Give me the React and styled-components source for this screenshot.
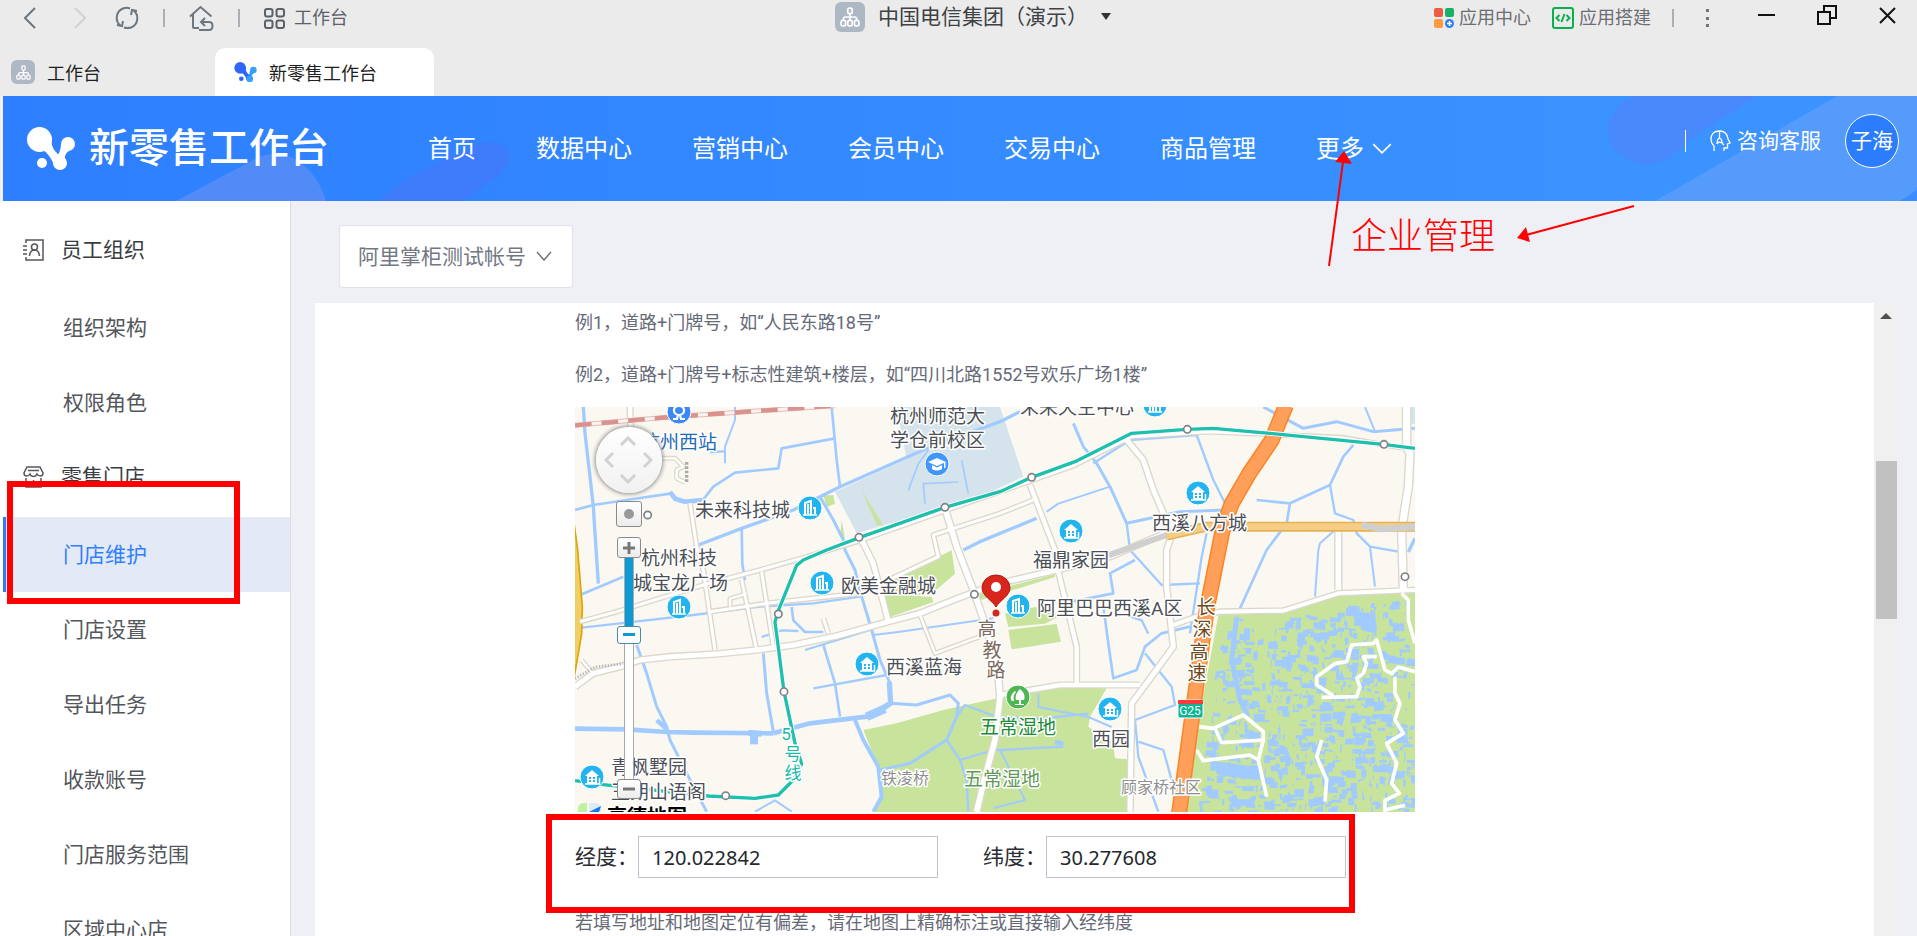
import React from "react";
import styled, { createGlobalStyle, css } from "styled-components";

const GlobalStyle = createGlobalStyle`
  *, *::before, *::after { box-sizing: border-box; }
  html, body, #root { height: 100%; }
  body {
    margin: 0;
    overflow: hidden;
    background: #eff0f5;
    color: #24262b;
    font-family: Roboto, "Noto Sans CJK SC", sans-serif;
    font-size: 18px;
  }
  button, input, select { font-family: inherit; }
`;

/* ---------- page shell ---------- */

const Page = styled.div`
  display: flex;
  flex-direction: column;
  height: 100vh;
`;

const BareButton = styled.button`
  display: inline-flex;
  align-items: center;
  padding: 0;
  border: 0;
  background: none;
  color: inherit;
  font-size: inherit;
  line-height: inherit;
  cursor: pointer;
`;

/* ---------- client window bar ---------- */

const WindowBar = styled.div`
  flex: none;
  background: #ebebeb;
`;

const ToolRow = styled.div`
  display: grid;
  grid-template-columns: 1fr auto 1fr;
  align-items: center;
  height: 36px;
  padding: 0 21px 0 24px;
  color: #6d7780;
`;

const ToolGroup = styled.div`
  display: flex;
  align-items: center;
  gap: ${(p) => (p.$end ? 21 : 24)}px;
  justify-content: ${(p) => (p.$end ? "flex-end" : "flex-start")};
`;

const NavArrows = styled.div`
  display: flex;
  gap: 38px;
  margin-right: 5px;
`;

const Divider = styled.span`
  width: 2px;
  height: 18px;
  background: #a9afb5;
`;

const ToolLink = styled(BareButton)`
  gap: ${(p) => p.$gap || 5}px;
  color: ${(p) => p.$color || "#6b6e73"};
  font-size: 18px;
  line-height: 24px;
`;

const WindowTitle = styled(BareButton)`
  gap: 13px;
  padding: 0 0 3px 26px;
  color: #3e4145;
  font-size: 21px;
  line-height: 30px;
`;

const OrgBadge = styled.span`
  display: inline-flex;
  align-items: center;
  justify-content: center;
  width: ${(p) => p.$size}px;
  height: ${(p) => p.$size}px;
  border-radius: 6px;
  background: #aeb8c4;
`;

const WindowControls = styled.div`
  display: flex;
  align-items: center;
  gap: 42px;
  margin-left: 18px;
  padding-bottom: 6px;
  color: #111;
`;

const TabRow = styled.div`
  display: flex;
  align-items: stretch;
  height: 48px;
  margin-top: 12px;
`;

const Tab = styled(BareButton)`
  gap: 12px;
  width: ${(p) => (p.$active ? 219 : 215)}px;
  padding-left: ${(p) => (p.$active ? 19 : 11)}px;
  border-radius: 10px 10px 0 0;
  background: ${(p) => (p.$active ? "#fff" : "transparent")};
  color: #1d1f22;
  font-size: 18px;
`;

/* ---------- blue header ---------- */

const Header = styled.header`
  position: relative;
  z-index: 3;
  flex: none;
  display: flex;
  align-items: center;
  height: 105px;
  margin-left: 3px;
  background: linear-gradient(90deg, #2e7fff 0%, #3388ff 40%, #3a93ff 85%);
  color: #fff;
`;

const HeaderArt = styled.svg`
  position: absolute;
  top: 0;
  ${(p) => (p.$right ? "right: 0;" : "left: 0;")}
`;

const Brand = styled.a`
  position: relative;
  display: flex;
  align-items: center;
  gap: 14px;
  width: 425px;
  padding-left: 24px;
  color: #fff;
  font-size: 40px;
  font-weight: 500;
  line-height: 56px;
  text-decoration: none;
`;

const MainNav = styled.nav`
  position: relative;
  display: flex;
  gap: 60px;
  font-size: 24px;
  line-height: 36px;
`;

const NavLink = styled.a`
  color: #fff;
  text-decoration: none;
  white-space: nowrap;
`;

const MoreWrap = styled.div`
  position: relative;
`;

const MoreButton = styled(BareButton)`
  gap: 8px;
  white-space: nowrap;
`;

const Annotation = styled.svg`
  position: absolute;
  left: 4px;
  top: 13px;
  pointer-events: none;
`;

const HeaderEnd = styled.div`
  position: relative;
  display: flex;
  align-items: center;
  margin-left: auto;
  padding: 0 18px 16px 0;
  font-size: 21px;
  line-height: 30px;
`;

const Service = styled(BareButton)`
  gap: 6px;
  margin-right: 24px;
  padding-left: 24px;
  border-left: 1px solid #fff;
  line-height: 20px;
`;

const Avatar = styled(BareButton)`
  justify-content: center;
  width: 54px;
  height: 54px;
  border: 1px solid #fff;
  border-radius: 50%;
  background: #2b7dfc;
`;

/* ---------- sidebar ---------- */

const Body = styled.div`
  flex: 1;
  display: flex;
  min-height: 0;
`;

const Sidebar = styled.aside`
  flex: none;
  width: 291px;
  padding: 12px 0 0 3px;
  overflow: hidden;
  border-right: 1px solid #dadce2;
  background: #fff;
`;

const MenuGroup = styled.div`
  display: flex;
  align-items: center;
  gap: 17px;
  height: 77px;
  padding: 0 0 8px 20px;
  color: #3a3d42;
  font-size: 21px;

  svg { margin-top: 4px; }
`;

const redFrame = css`
  content: "";
  position: absolute;
  z-index: 2;
  border: 6px solid #f00;
  pointer-events: none;
`;

const MenuItem = styled.a`
  position: relative;
  display: flex;
  align-items: center;
  height: 75px;
  padding: 0 0 4px 60px;
  color: ${(p) => (p.$active ? "#2f80ff" : "#53565b")};
  background: ${(p) => (p.$active ? "#e3eaf6" : "transparent")};
  box-shadow: ${(p) => (p.$active ? "inset 3px 0 #2a7dff" : "none")};
  font-size: 21px;
  text-decoration: none;

  ${(p) =>
    p.$active &&
    css`
      &::after {
        ${redFrame}
        left: 4px;
        top: -36px;
        width: 233px;
        height: 123px;
      }
    `}
`;

/* ---------- main area ---------- */

const Main = styled.main`
  flex: 1;
  display: flex;
  flex-direction: column;
  gap: 15px;
  min-width: 0;
  padding: 24px 19px 0 24px;
`;

const AccountPicker = styled.label`
  position: relative;
  flex: none;
  align-self: flex-start;
  margin-left: 24px;

  svg {
    position: absolute;
    right: 21px;
    top: 24px;
    pointer-events: none;
  }
`;

const AccountSelect = styled.select`
  appearance: none;
  width: 234px;
  height: 63px;
  padding: 0 18px;
  border: 1px solid #dfe1e6;
  border-radius: 4px;
  background: #fff;
  color: #737783;
  font-size: 21px;
`;

const ScrollPane = styled.div`
  flex: 1;
  display: flex;
  min-height: 0;
`;

const Panel = styled.section`
  flex: 1;
  min-width: 0;
  overflow: hidden;
  padding: 8px 0 0 260px;
  background: #fff;
`;

const Hint = styled.p`
  margin: 0 0 ${(p) => p.$after || 0}px;
  color: #666a77;
  font-size: 18px;
  line-height: 24px;
`;

const ScrollTrack = styled.div`
  display: flex;
  flex-direction: column;
  align-items: center;
  width: 24px;
  padding-top: 10px;
  background: #f0f0f0;
`;

const ScrollThumb = styled.div`
  width: 21px;
  height: 158px;
  margin-top: 142px;
  background: #c1c1c1;
`;

const CoordRow = styled.div`
  position: relative;
  display: flex;
  gap: 45px;
  width: 771px;
  margin: 24px 0 33px;

  &::after {
    ${redFrame}
    left: -29px;
    top: -22px;
    width: 809px;
    height: 99px;
  }
`;

const CoordField = styled.label`
  display: flex;
  align-items: center;
  color: #2a2d33;
  font-size: 21px;
  line-height: 30px;
  white-space: nowrap;
`;

const CoordInput = styled.input`
  width: 300px;
  height: 42px;
  padding: 0 13px;
  border: 1px solid #c0c4d4;
  outline: 0;
  background: #fff;
  color: #24272d;
  && { font-family: "Noto Sans", sans-serif; }
  font-size: 20px;
`;

/* ---------- map ---------- */

const MapFrame = styled.div`
  position: relative;
  width: 840px;
  height: 405px;
  overflow: hidden;

  > svg { display: block; }
`;

const MapText = styled.text`
  fill: ${(p) => p.$color || "#4c4f55"};
  stroke: #fff;
  stroke-width: 3px;
  stroke-linejoin: round;
  paint-order: stroke;
  font-size: ${(p) => p.$size || 19}px;
  font-weight: ${(p) => p.$weight || 400};
  text-anchor: ${(p) => (p.$middle ? "middle" : "start")};
`;

const MapControls = styled.div`
  position: absolute;
  left: 20px;
  top: 20px;
  display: flex;
  flex-direction: column;
  align-items: center;
  width: 67px;
`;

const PanWheel = styled.div`
  display: grid;
  grid-template-columns: repeat(3, 1fr);
  grid-template-rows: repeat(3, 1fr);
  place-items: center;
  width: 66px;
  height: 66px;
  margin-bottom: 8px;
  padding: 5px;
  border-radius: 50%;
  background: linear-gradient(#fff, #f1f1f1);
  box-shadow: 0 0 4px 1px #888;
`;

const PanButton = styled(BareButton)`
  grid-area: ${(p) => p.$area};
`;

const BoxButton = styled(BareButton)`
  justify-content: center;
  width: ${(p) => p.$size}px;
  height: ${(p) => p.$h}px;
  margin-bottom: ${(p) => p.$after || 0}px;
  border: 1px solid #8b8b8b;
  border-radius: 3px;
  background: linear-gradient(#fff, #ececec);
`;

const ZoomRange = styled.input`
  appearance: none;
  writing-mode: vertical-lr;
  direction: rtl;
  width: 24px;
  height: 221px;
  margin: 0;
  background:
    linear-gradient(#0b9ad6 70px, #fff 70px) center / 8px 100% no-repeat,
    linear-gradient(#aaa, #aaa) center / 10px 100% no-repeat;

  &::-webkit-slider-thumb {
    appearance: none;
    width: 24px;
    height: 18px;
    border: 1px solid #4d8ba3;
    border-radius: 3px;
    background: linear-gradient(#0b9ad6, #0b9ad6) center / 12px 3px no-repeat, #fff;
  }
`;

/* Outlines are drawn at three units to the pixel. */
const RIVERS = [
  [10, "25,0 30,79 45,209 55,299 60,379 70,530"],
  [8, "0,309 55,294 155,279 290,259 315,284 385,277 415,239 480,197 610,184 620,124 780,94"],
  [14, "285,255 300,275 330,284 380,280"],
  [8, "770,0 785,159 795,239"],
  [6, "480,0 480,39 450,119 450,169"],
  [7, "405,135 450,133"],
  [10, "370,414 500,364 655,309 795,239 955,169 1045,129 1275,44 1335,14"],
  [8, "500,364 502,470 510,520"],
  [9, "735,269 775,339 805,399 810,429 840,489 860,569 890,669 915,759 945,829 945,889"],
  [16, "943,825 947,889 900,920"],
  [26, "930,905 875,929"],
  [14, "945,889 875,929 705,949 595,979"],
  [14, "595,979 355,977 275,975 155,967 0,965"],
  [18, "520,977 560,980"],
  [24, "537,977 537,1012"],
  [14, "245,940 275,965"],
  [7, "0,664 135,649 355,624 555,599 715,589 855,569"],
  [8, "15,564 145,509"],
  [9, "185,714 215,799 245,899 275,959 285,999 340,1109 395,1214"],
  [9, "565,739 575,859 595,974"],
  [8, "745,714 780,829 795,929"],
  [6, "690,729 885,669"],
  [6, "895,684 975,674 1255,634"],
  [7, "715,844 935,804"],
  [8, "650,600 655,640 690,675 745,675"],
  [7, "560,690 620,670 670,672"],
  [9, "945,889 1025,894 1125,864 1150,889 1145,929 1115,999 1005,1069 915,1089"],
  [7, "1145,929 1170,894 1265,930 1400,935 1540,920"],
  [12, "840,939 865,999 910,1079 920,1169 895,1214"],
  [7, "1115,999 1155,1059 1255,1029 1275,1029 1465,1019"],
  [14, "1440,1005 1465,1010"],
  [7, "1155,1059 1175,1120 1180,1214"],
  [6, "1275,1029 1315,1109 1350,1179 1255,1204"],
  [6, "540,1214 600,1180 650,1214"],
  [10, "1165,429 1215,404 1385,334"],
  [6, "1415,314 1450,290 1605,239"],
  [9, "1495,49 1525,119 1565,169 1605,239 1655,349 1815,314 1950,309"],
  [7, "1655,349 1665,429 1760,534 1875,529"],
  [7, "1555,169 1665,99 1865,84 1915,219 1950,289"],
  [9, "2065,0 2185,64 2285,44 2395,74 2520,64"],
  [6, "2370,0 2400,74"],
  [8, "2335,114 2305,149 2265,234 2145,289 2045,279"],
  [8, "2145,289 2135,349 2075,429 1995,604"],
  [7, "2265,234 2280,319 2335,339 2345,379 2385,419 2470,434"],
  [6, "2385,419 2400,539"],
  [6, "2280,369 2235,409 2230,429 2220,569"],
  [10, "2520,394 2500,435"],
  [7, "1895,379 1880,450 1845,679"],
  [8, "1680,459 1605,499 1615,559 1465,589"],
  [8, "1585,599 1600,709 1615,814 1685,789 1710,719 1760,679 1845,659"],
  [7, "1640,620 1700,640 1720,680"],
  [7, "1710,739 1790,839 1800,894 1680,939"],
  [7, "1680,939 1690,1049 1750,1214"],
  [7, "1690,1004 1765,1029 1790,1119"],
  [6, "1390,860 1390,900 1540,930 1610,960"],
  [5, "1000,250 1030,170 1060,130"],
  [5, "1050,290 1045,230 1150,225"],
  [5, "1160,160 1180,260"],
];

const GREENS = [
  "925,560 1070,570 1075,585 945,630",
  "945,520 1130,430 1140,500 1070,560 930,570",
  "1300,669 1445,651 1458,704 1310,727",
  "1215,560 1440,502 1440,510 1215,580",
  "1290,620 1380,600 1460,625 1410,650 1300,660",
  "745,265 775,265 780,290 755,300",
  "800,340 810,395 795,390",
  "860,250 925,355 905,355",
  "865,969 965,949 1105,909 1260,875 1385,854 1455,839 1595,844 1545,929 1540,959 1615,1009 1620,1054 1660,1057 1660,1215 895,1215 925,1170 910,1080",
  "1930,625 2125,615 2295,560 2520,555 2520,1215 1835,1215 1865,970",
];

const ROADS = [
  [18, "0,839 55,799 135,779 195,759 285,749 425,741 545,729 655,714 785,687 940,644 1035,619 1135,579 1215,549 1295,524 1445,489 1605,449 1770,379"],
  [12, "15,644 125,614 385,534 555,489 675,455 855,401 1110,311 1370,221 1500,174 1670,89 1900,74 2300,92 2480,122"],
  [18, "855,389 895,470 940,644"],
  [12, "405,614 575,589 855,559 1090,449 1075,384 1275,319 1375,279"],
  [12, "345,289 365,419 385,489 420,729"],
  [12, "500,519 545,729"],
  [12, "560,494 595,719"],
  [10, "465,599 465,575 515,560"],
  [12, "745,634 760,679"],
  [20, "1110,304 1145,419 1195,549 1240,680 1270,809 1275,869 1260,999 1225,1129 1205,1215"],
  [16, "1365,234 1440,429 1450,494 1505,719 1505,829"],
  [16, "1275,864 1455,834 1695,834"],
  [18, "1655,99 1705,159 1735,249 1765,319 1785,399 1775,429 1775,539 1795,719 1715,829 1670,889 1665,1214"],
  [15, "1795,654 1865,629 1935,614 2125,611 2290,559 2520,549"],
  [20, "2290,369 2290,549"],
  [24, "2495,0 2495,120 2505,140 2500,239 2480,369 2485,549"],
  [10, "1035,624 1080,739 1215,689"],
  [16, "165,0 167,64"],
  [10, "255,154 300,154 325,179 305,189 305,214 330,226"],
  [10, "20,760 50,795"],
];

const PATHS = [
  "1870,959 1915,964 2005,924 2065,974 2065,999 1940,1007 1920,964",
  "2065,999 2050,1059 2075,1169",
  "1865,1029 1885,1061 2025,1044 2050,1059",
  "2240,871 2345,869 2355,839 2345,814 2365,799 2375,770 2365,749 2405,749",
  "2275,866 2225,834 2225,809 2280,770 2315,764 2330,714 2395,709 2405,699 2430,789 2450,800 2470,780 2520,794",
  "2480,559 2500,579 2500,639 2520,709",
  "2460,809 2460,859 2475,889 2460,939 2485,979 2435,1009 2465,1069 2450,1129 2473,1159 2430,1180 2430,1215",
  "2430,1209 2490,1195",
  "2240,999 2225,1049 2255,1119 2250,1184",
];

const METRO =
  "0,1121 85,1133 400,1167 540,1174 610,1164 655,1119 680,1070 660,1009 627,854 600,644 610,611 665,475 685,459 755,429 855,391 1110,301 1275,254 1370,211 1500,164 1670,79 1835,67 1915,64 2085,79 2425,112 2520,124";
const EXPRESSWAY = "2133,-5 2090,100 2023,199 1970,290 1945,359 1925,459 1895,609 1865,829 1812,1220";
const STATIONS = [
  [218, 324], [852, 391], [1110, 301], [1370, 211], [1837, 67], [2427, 112],
  [610, 621], [627, 854], [1198, 562], [452, 1166], [2490, 509],
];

/* Small ponds scattered through the wetland. */
const PONDS = (() => {
  let seed = 71;
  const next = () => {
    seed = (seed * 16807) % 2147483647;
    return seed / 2147483647;
  };
  const list = [];
  for (let i = 0; i < 900; i += 1) {
    const x = 1850 + next() * 660;
    const y = 575 + next() * 640;
    const size = next();
    const w = 4 + size * size * 32;
    const h = 5 + next() * 20;
    const k = next() * 8 - 4;
    const leftEdge = 1950 - (y - 575) * 0.13;
    const topEdge = x < 2125 ? 635 : 635 - (x - 2125) * 0.2;
    if (x < leftEdge || y < topEdge) continue;
    list.push(`M${x | 0},${y | 0}l${w | 0},${k | 0}l${k | 0},${h | 0}l${-w | 0},${-k | 0}z`);
  }
  return list.join("");
})();

const LABELS = [
  ["杭州西站", 66, 42, "#1f6cb5"],
  ["未来科技城", 120, 110],
  ["杭州师范大", 315, 16],
  ["学仓前校区", 315, 40],
  ["杭州科技", 66, 158],
  ["城宝龙广场", 58, 183],
  ["欧美金融城", 266, 186],
  ["未来天空中心", 445, 7],
  ["西溪八方城", 577, 123],
  ["福鼎家园", 458, 160],
  ["阿里巴巴西溪A区", 462, 208],
  ["西溪蓝海", 311, 267],
  ["五常湿地", 405, 327, "#1d8a35"],
  ["五常湿地", 389, 379, "#5f9a5a"],
  ["西园", 517, 339],
  ["顾家桥社区", 546, 386, "#8f8f8f", 16],
  ["铁凌桥", 306, 377, "#8f8f8f", 16],
  ["青枫墅园", 36, 367],
  ["玉朗山语阁", 36, 392],
];

const VERTICAL_LABELS = [
  ["高", 412, 229, "#7d6b60"],
  ["教", 417, 250, "#7d6b60"],
  ["路", 421, 270, "#7d6b60"],
  ["长", 631, 207, "#6d4a22"],
  ["深", 627, 229, "#6d4a22"],
  ["高", 624, 252, "#6d4a22"],
  ["速", 622, 273, "#6d4a22"],
  ["5", 211, 333, "#17b9a8", 17],
  ["号", 218, 353, "#17b9a8", 17],
  ["线", 218, 372, "#17b9a8", 17],
];

const PLACES = [
  ["tower", 235, 101], ["tower", 247, 176], ["tower", 104, 200],
  ["tower", 580, -2], ["tower", 443, 199],
  ["house", 623, 86], ["house", 496, 124], ["house", 292, 257],
  ["house", 17, 370], ["house", 535, 302],
  ["rail", 104, 5], ["school", 362, 57], ["tree", 443, 290],
];

const PLACE_COLORS = { rail: "#3d87f5", school: "#3f97fb", tree: "#4db551" };

function PlaceGlyph({ kind }) {
  if (kind === "tower")
    return (
      <g fill="none" stroke="#fff">
        <path d="M-5 7V-5L1-7V7M-2-4V6M1-7V6M5 6V0H3" strokeWidth="2" />
        <path d="M-7 7H7" strokeWidth="1.5" />
      </g>
    );
  if (kind === "house")
    return (
      <g>
        <path d="M-7-1L0-7L7-1H5V7H-5V-1z" fill="#fff" />
        <path d="M-3 0h2v2h-2zM1 0h2v2h-2zM-3 3h2v2h-2zM1 3h2v2h-2z" fill="#22b4ee" />
        <path d="M-7 7H8M7.500 1V7" stroke="#fff" strokeWidth="1.500" />
      </g>
    );
  if (kind === "rail")
    return (
      <path
        d="M-6 7H-2L-1 3C-7 1-6-6 0-6S7 1 1 3L2 7H6"
        fill="none"
        stroke="#fff"
        strokeWidth="2.200"
      />
    );
  if (kind === "school")
    return (
      <g fill="#fff">
        <path d="M-9-2L0-6L9-2L0 2z" />
        <path d="M-5 1V5Q0 8 5 5V1L0 3.500z" />
        <path d="M7-2h1.500V4H7z" />
      </g>
    );
  return (
    <g fill="#fff">
      <path d="M2-8C7-4 7 0 6 3H-2C-3 0-2-4 2-8z" />
      <path d="M-3-6C-8-2-8 2-6 4H-4C-5 0-4-3-2-5z" />
      <path d="M1 2h2v6H1zM-3 7H6v1H-3z" />
    </g>
  );
}

function CityMap() {
  return (
    <svg width="840" height="405" viewBox="0 0 840 405" role="img" aria-label="门店位置地图">
      <rect width="840" height="405" fill="#fbf8f1" />
      <g transform="scale(0.33333)" fill="none" strokeLinejoin="round">
        <polygon points="780,254 995,157 965,0 1275,0 1345,209 1215,270 845,379" fill="#d5e4ec" />
        <polygon points="2497,0 2520,0 2520,50 2507,50" fill="#d5e4ec" />
        {GREENS.map((points) => (
          <polygon key={points} points={points} fill="#c8e39c" />
        ))}
        <path d={PONDS} fill="#a1cbff" />
        <polyline points="1985,629 1970,759 1995,879 2020,929" stroke="#a1cbff" strokeWidth="15" />
        <path d="M1900 1060L2050 1080L2055 1120L1930 1105zM2350 635L2400 610L2405 680L2360 670z" fill="#a1cbff" />
        {RIVERS.map(([width, points]) => (
          <polyline key={points} points={points} stroke="#a1cbff" strokeWidth={width} />
        ))}
        <polygon points="-4,340 8,429 22,600 20,680 -4,820" fill="#f0cf66" stroke="#dba50c" strokeWidth="5" />
        {ROADS.map(([width, points]) => (
          <polyline key={points} points={points} stroke="#dcd7cb" strokeWidth={width + 5} />
        ))}
        {ROADS.map(([width, points]) => (
          <polyline key={points} points={points} stroke="#fff" strokeWidth={width - 3} />
        ))}
        <polyline points="0,815 60,780 145,770" stroke="#b5b5b5" strokeWidth="8" strokeDasharray="4 5" />
        <polyline points="335,165 335,225" stroke="#aaa" strokeWidth="10" strokeDasharray="8 5" />
        {PATHS.map((points) => (
          <polyline key={points} points={points} stroke="#fff" strokeWidth="11" />
        ))}
        <polyline points="0,55 285,30 780,-4" stroke="#e6bcb8" strokeWidth="15" />
        <polyline points="0,55 285,30 780,-4" stroke="#fbf3f0" strokeWidth="9" />
        <polyline points="0,55 285,30 780,-4" stroke="#d9928d" strokeWidth="13" strokeDasharray="50 30" />
        <polyline points="1600,445 1775,384" stroke="#cfcfcf" strokeWidth="18" />
        <polyline points="1775,386 1895,359 2520,359" stroke="#e6b254" strokeWidth="30" />
        <polyline points="1775,386 1895,359 2520,359" stroke="#f6cd85" strokeWidth="20" />
        <polyline points="2360,354 2420,366 2520,360" stroke="#cfcfcf" strokeWidth="20" />
        <polyline points={EXPRESSWAY} stroke="#f98527" strokeWidth="48" />
        <polyline points={EXPRESSWAY} stroke="#ff9f5a" strokeWidth="39" />
        <polyline points={METRO} stroke="#fff" strokeWidth="15" />
        <polyline points={METRO} stroke="#1fbfae" strokeWidth="10" />
        {STATIONS.map(([x, y]) => (
          <circle key={`${x}-${y}`} cx={x} cy={y} r="11" fill="#fff" stroke="#7d8288" strokeWidth="5" />
        ))}
      </g>

      {LABELS.map(([text, x, y, color, size]) => (
        <MapText key={`${text}${y}`} x={x} y={y} $color={color} $size={size}>{text}</MapText>
      ))}
      {VERTICAL_LABELS.map(([text, x, y, color, size]) => (
        <MapText key={`${text}${y}`} x={x} y={y} $color={color} $size={size} $middle>{text}</MapText>
      ))}

      {PLACES.map(([kind, x, y]) => (
        <g key={`${x}-${y}`} transform={`translate(${x} ${y})`}>
          <circle r="12" fill={PLACE_COLORS[kind] || "#22b4ee"} stroke="#fff" />
          <PlaceGlyph kind={kind} />
        </g>
      ))}

      <rect x="603" y="293" width="25" height="18" rx="2" fill="#0bb596" stroke="#fff" />
      <path d="M603 297v-3q0-1 1-1h23q1 0 1 1v3z" fill="#fb3b3b" />
      <text x="615" y="308" fill="#fff" fontSize="12" textAnchor="middle">G25</text>

      <path d="M421 200C418 194 407 189 407 181A14 13 0 0 1 435 181C435 189 424 194 421 200z" fill="#d9261c" stroke="#a81810" />
      <ellipse cx="421" cy="180" rx="5" ry="5" fill="#fff" />
      <circle cx="421" cy="206" r="3.500" fill="#cf2a20" />

      <path d="M3 405V402Q3 396 9 396H12V405z" fill="#bff2a0" />
      <path d="M14 396H20Q26 396 26 402V405H14z" fill="#dcecf3" />
      <path d="M14 405L26 399L24 405z" fill="#1377f0" />
      <MapText x="32" y="417" $size={20} $weight={700} $color="#000">高德地图</MapText>
    </svg>
  );
}

/* ---------- icons ---------- */

const Stroke = ({ w, h, box, d, width = 2, color = "currentColor", ...rest }) => (
  <svg width={w} height={h} viewBox={box || `0 0 ${w} ${h}`} fill="none" stroke={color} strokeWidth={width} {...rest}>
    <path d={d} />
  </svg>
);

const ChevronDown = ({ w = 18, h = 11 }) => (
  <Stroke w={w} h={h} box="0 0 18 11" d="M1 1L9 9L17 1" width={1.5} />
);

const OrgIcon = ({ size }) => (
  <svg width={size} height={size} viewBox="0 0 18 18" fill="none" stroke="#fff" strokeWidth="1.500">
    <rect x="7" y="1" width="4" height="5" rx="1.500" />
    <rect x="1" y="12" width="4" height="5" rx="1.500" />
    <rect x="7" y="12" width="4" height="5" rx="1.500" />
    <rect x="13" y="12" width="4" height="5" rx="1.500" />
    <path d="M9 6V12M3 12V11Q3 9 5 9H13Q15 9 15 11V12" />
  </svg>
);

const BrandMark = ({ w, h, left = "#fff", right = "#fff" }) => (
  <svg width={w} height={h} viewBox="0 0 48 43">
    <circle cx="41" cy="17" r="7" fill={right} />
    <path d="M34 17Q34 26 27 33L38 38Q36 27 42 24z" fill={right} />
    <circle cx="33" cy="36" r="7" fill={right} />
    <path d="M6 22Q19 19 27 38L36 30Q23 24 24.500 10z" fill={left} />
    <circle cx="12.500" cy="12.500" r="12.500" fill={left} />
    <circle cx="15" cy="36" r="5" fill={left} />
    {right !== left && <circle cx="33" cy="36" r="7" fill={right} />}
  </svg>
);

const RefreshIcon = () => (
  <Stroke
    w={24}
    h={24}
    d="M8 2.500A10 10 0 0 0 6 20M2 19L7 20L8 15M16 21.500A10 10 0 0 0 18 4M22 5L17 4L16 9M8 2.500A10 10 0 0 1 15 2.500M9 21.500Q12 22.500 16 21.500"
  />
);

const HomeIcon = () => (
  <Stroke
    w={25}
    h={27}
    d="M1 11.500L11.500 2L22.500 11.500M4 9V22Q4 23 5 23H10M12 17H20Q23.500 17 23.500 21T20 25H10M16 13L12 17L16 21"
  />
);

const GridIcon = () => (
  <svg width="21" height="21" viewBox="0 0 21 21" fill="none" stroke="currentColor" strokeWidth="2">
    <rect x="1" y="1" width="7.500" height="7.500" rx="2" />
    <rect x="12.500" y="1" width="7.500" height="7.500" rx="2" />
    <rect x="1" y="12.500" width="7.500" height="7.500" rx="2" />
    <rect x="12.500" y="12.500" width="7.500" height="7.500" rx="2" />
  </svg>
);

const AppsIcon = () => (
  <svg width="20" height="20" viewBox="0 0 20 20">
    <rect x="0" y="0" width="9" height="9" rx="2" fill="#ee5b44" />
    <rect x="11" y="0" width="9" height="9" rx="2" fill="#17b168" />
    <rect x="0" y="11" width="9" height="9" rx="2" fill="#ff9a3d" />
    <circle cx="15.500" cy="15.500" r="4.500" fill="#2f80f5" />
    <path d="M15.500 13v5M13 15.500h5" stroke="#fff" strokeWidth="1.500" />
  </svg>
);

const CodeIcon = () => (
  <svg width="22" height="22" viewBox="0 0 22 22" fill="none" stroke="#0bb04b" strokeWidth="2">
    <rect x="1" y="1" width="20" height="20" rx="2" />
    <path d="M7.500 8L4.500 11L7.500 14M14.500 8L17.500 11L14.500 14M12.500 7L9.500 15" />
  </svg>
);

const StaffIcon = () => (
  <svg width="21" height="22" viewBox="0 0 21 22" fill="none" stroke="#54575c" strokeWidth="1.500">
    <path d="M3 4V1H20V21H3V18M0 7H4M0 11H4M0 15H4" />
    <circle cx="11.500" cy="8" r="3" />
    <path d="M6.500 17Q7 11 11.500 11T16.500 17" />
  </svg>
);

const StoreIcon = () => (
  <svg width="21" height="22" viewBox="0 0 21 22" fill="none" stroke="#54575c" strokeWidth="1.500">
    <path d="M4 1H17L20 7Q20 10 17.500 10T14 8Q13 10.500 10.500 10.500T7 8Q6 10 3.500 10T1 7zM5 4.500H16M3 12V21H18V12M7 21V15M10.500 14V21M14 21V15" />
  </svg>
);

const HeadsetIcon = () => (
  <svg width="21" height="22" viewBox="0 0 21 22" fill="none" stroke="#fff" strokeWidth="1.300">
    <path d="M4 21V16Q1 13 1 9.500Q1 1 9.500 1Q17 1 18 9L20 13L17.500 14V18H14V21M9.500 1V8M9.500 8Q7 9 7 14M9.500 8Q12 9 12 13M7 14Q8 11 12 13L14 15" />
  </svg>
);

const MENU = [
  { title: "员工组织", icon: <StaffIcon />, items: ["组织架构", "权限角色"] },
  {
    title: "零售门店",
    icon: <StoreIcon />,
    items: ["门店维护", "门店设置", "导出任务", "收款账号", "门店服务范围", "区域中心店"],
  },
];

const NAV = ["首页", "数据中心", "营销中心", "会员中心", "交易中心", "商品管理"];

const PANS = [
  ["向上", "1 / 2", "M2 9L9 2L16 9", 18, 11],
  ["向左", "2 / 1", "M9 2L2 9L9 16", 11, 18],
  ["向右", "2 / 3", "M2 2L9 9L2 16", 11, 18],
  ["向下", "3 / 2", "M2 2L9 9L16 2", 18, 11],
];

export default function App() {
  return (
    <Page>
      <GlobalStyle />
      <WindowBar>
        <ToolRow>
          <ToolGroup>
            <NavArrows>
              <BareButton aria-label="后退"><Stroke w={12} h={22} d="M11 1L1 11L11 21" /></BareButton>
              <BareButton aria-label="前进"><Stroke w={12} h={22} d="M1 1L11 11L1 21" color="#d0d2d4" /></BareButton>
            </NavArrows>
            <BareButton aria-label="刷新"><RefreshIcon /></BareButton>
            <Divider />
            <BareButton aria-label="主页"><HomeIcon /></BareButton>
            <Divider />
            <ToolLink $gap={9} $color="#5b6167"><GridIcon />工作台</ToolLink>
          </ToolGroup>
          <WindowTitle>
            <OrgBadge $size={30}><OrgIcon size={20} /></OrgBadge>
            中国电信集团（演示）
            <svg width="10" height="7" viewBox="0 0 10 7"><path d="M0 0H10L5 7z" fill="#333" /></svg>
          </WindowTitle>
          <ToolGroup $end>
            <ToolLink><AppsIcon />应用中心</ToolLink>
            <ToolLink><CodeIcon />应用搭建</ToolLink>
            <Divider />
            <BareButton aria-label="更多选项">
              <svg width="24" height="18" viewBox="0 0 24 18" fill="#6d7780">
                <rect x="11" y="0" width="3" height="3" /><rect x="11" y="8" width="3" height="3" /><rect x="11" y="15" width="3" height="3" />
              </svg>
            </BareButton>
            <WindowControls>
              <BareButton aria-label="最小化"><Stroke w={17} h={20} d="M0 10H17" /></BareButton>
              <BareButton aria-label="还原"><Stroke w={20} h={20} d="M1 7H13V19H1zM7 7V1H19V13H13" /></BareButton>
              <BareButton aria-label="关闭"><Stroke w={17} h={17} d="M1 1L16 16M16 1L1 16" /></BareButton>
            </WindowControls>
          </ToolGroup>
        </ToolRow>
        <TabRow>
          <Tab><OrgBadge $size={24}><OrgIcon size={15} /></OrgBadge>工作台</Tab>
          <Tab $active><BrandMark w={23} h={20} left="#2f66f6" right="#36a0fb" />新零售工作台</Tab>
        </TabRow>
      </WindowBar>

      <Header>
        <HeaderArt width="560" height="105" viewBox="0 0 560 105">
          <path d="M173 105L250 64C285 45 315 75 323 105z" fill="#508bf8" />
          <path d="M375 105C405 78 440 66 470 49C500 38 520 60 495 80L460 105z" fill="#3e7cfb" />
        </HeaderArt>
        <HeaderArt $right width="320" height="105" viewBox="0 0 320 105">
          <path d="M36 0H160L90 45C70 70 50 72 35 65C0 50 5 15 36 0z" fill="#4989fc" />
          <path d="M58 105L240 0H320V105z" fill="#549bfb" />
          <path d="M303 105L320 94V105z" fill="#3a8cff" />
        </HeaderArt>
        <Brand href="#home"><BrandMark w={48} h={43} />新零售工作台</Brand>
        <MainNav>
          {NAV.map((name) => (
            <NavLink key={name} href="#nav">{name}</NavLink>
          ))}
          <MoreWrap>
            <MoreButton>更多 <ChevronDown w={20} h={12} /></MoreButton>
            <Annotation width="330" height="130" viewBox="0 0 330 130">
              <path d="M9 122L23 18M314 62L206 91" stroke="#f00" strokeWidth="2" />
              <path d="M24 7L32 20L15 18zM197 94L206 83L210 98z" fill="#f00" />
              <text x="31" y="105" fill="#f00" fontSize="36" fontWeight="300">企业管理</text>
            </Annotation>
          </MoreWrap>
        </MainNav>
        <HeaderEnd>
          <Service><HeadsetIcon />咨询客服</Service>
          <Avatar>子海</Avatar>
        </HeaderEnd>
      </Header>

      <Body>
        <Sidebar>
          {MENU.map((group) => (
            <React.Fragment key={group.title}>
              <MenuGroup>{group.icon}{group.title}</MenuGroup>
              {group.items.map((item) => (
                <MenuItem key={item} href="#menu" $active={item === "门店维护"}>{item}</MenuItem>
              ))}
            </React.Fragment>
          ))}
        </Sidebar>
        <Main>
          <AccountPicker>
            <AccountSelect aria-label="账号">
              <option>阿里掌柜测试帐号</option>
            </AccountSelect>
            <Stroke w={16} h={16} d="M1 3L8 11L15 3" width={1.5} color="#737783" />
          </AccountPicker>
          <ScrollPane>
            <Panel>
              <Hint $after={28}>例1，道路+门牌号，如“人民东路18号”</Hint>
              <Hint $after={20}>例2，道路+门牌号+标志性建筑+楼层，如“四川北路1552号欢乐广场1楼”</Hint>
              <MapFrame>
                <CityMap />
                <MapControls>
                  <PanWheel>
                    {PANS.map(([name, area, d, w, h]) => (
                      <PanButton key={name} aria-label={name} $area={area}>
                        <Stroke w={w} h={h} d={d} width={3} color="#d2d2d2" />
                      </PanButton>
                    ))}
                  </PanWheel>
                  <BoxButton $size={26} $h={26} $after={10} aria-label="定位">
                    <svg width="10" height="10"><circle cx="5" cy="5" r="5" fill="#999" /></svg>
                  </BoxButton>
                  <BoxButton $size={24} $h={21} aria-label="放大">
                    <Stroke w={12} h={12} d="M6 0V12M0 6H12" width={3} color="#777" />
                  </BoxButton>
                  <ZoomRange type="range" min="3" max="18" defaultValue="13" aria-label="缩放级别" />
                  <BoxButton $size={24} $h={20} aria-label="缩小">
                    <Stroke w={12} h={12} d="M0 6H12" width={3} color="#777" />
                  </BoxButton>
                </MapControls>
              </MapFrame>
              <CoordRow>
                <CoordField>经度：<CoordInput defaultValue="120.022842" /></CoordField>
                <CoordField>纬度：<CoordInput defaultValue="30.277608" /></CoordField>
              </CoordRow>
              <Hint>若填写地址和地图定位有偏差，请在地图上精确标注或直接输入经纬度</Hint>
            </Panel>
            <ScrollTrack>
              <svg width="12" height="6" viewBox="0 0 12 6"><path d="M6 0L12 6H0z" fill="#4f4f4f" /></svg>
              <ScrollThumb />
            </ScrollTrack>
          </ScrollPane>
        </Main>
      </Body>
    </Page>
  );
}
